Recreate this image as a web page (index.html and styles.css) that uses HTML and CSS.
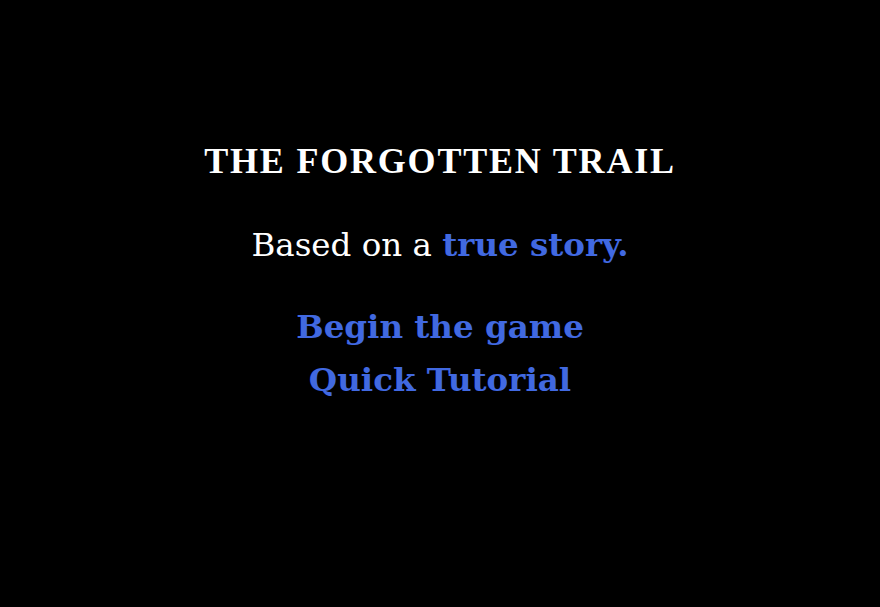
FILE: index.html
```html
<!DOCTYPE html>
<html lang="en">
  <head>
    <meta charset="UTF-8" />
    <meta name="viewport" content="width=device-width, initial-scale=1.0" />
    <title>The Forgotten Trail</title>
    <link rel="stylesheet" href="styles.css">
  </head>
  <body>
    <div class="title-screen">
      <h1>THE FORGOTTEN TRAIL</h1>
      <p class="tagline">Based on a <span class="highlight">true story.</span></p>
      <div class="menu">
        <a class="menu-link" href="#" onclick="startGame()">Begin the game</a>
        <a class="menu-link" href="#" onclick="openTutorial()">Quick Tutorial</a>
      </div>
    </div>

    <script>
      function startGame() {
        // TODO: pindah ke scene pertama
      }

      function openTutorial() {
        // TODO: tampilkan tutorial singkat
      }
    </script>
  </body>
</html>
```

FILE: styles.css
```css
body {
  margin: 0;
  padding: 0;
  background: #000;
  color: white;
  font-family: Georgia, "DejaVu Serif", serif;
  min-height: 100vh;
}

.title-screen {
  display: flex;
  flex-direction: column;
  align-items: center;
  padding-top: 140px;
}

h1 {
  font-family: "Liberation Serif", "Times New Roman", serif;
  font-size: 36px;
  letter-spacing: 1.8px;
  font-weight: bold;
  margin: 0 0 43px;
}

.tagline {
  font-size: 32.5px;
  margin: 0 0 36px;
}

.highlight {
  color: royalblue;
  font-weight: bold;
}

.menu {
  display: flex;
  flex-direction: column;
  align-items: center;
}

.menu-link {
  color: royalblue;
  font-size: 32.5px;
  font-weight: bold;
  text-decoration: none;
  line-height: 53px;
}
```
